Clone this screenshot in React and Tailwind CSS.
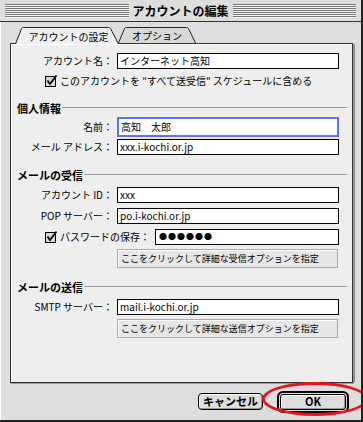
import React from 'react'

// Mac OS 9 style "edit account" dialog

function Check() {
  return (
    <svg width="13" height="13" viewBox="0 0 13 13" className="shrink-0">
      <rect x="0.5" y="1.5" width="10" height="10" fill="#d6d6d6" stroke="#000" />
      <path d="M2.5 5.5 L5 9 L11.5 0.5" fill="none" stroke="#000" strokeWidth="1.7" />
    </svg>
  )
}

function Field({ label, value, focus }) {
  return (
    <div className="flex items-center">
      <div className="w-[102px] text-right whitespace-nowrap">{label}</div>
      <div
        className={
          focus
            ? 'ml-[4px] w-[222px] h-[20px] flex items-center pl-[2px] bg-white border-2 border-[#5a74ff]'
            : 'ml-[4px] w-[222px] h-[16px] flex items-center pl-[2px] bg-white border border-black'
        }
      >
        {value}
      </div>
    </div>
  )
}

function Section({ title, className }) {
  return (
    <div className={`flex items-center h-[14px] pl-[6px] pr-[5px] ${className}`}>
      <span className="font-bold text-[11px] whitespace-nowrap">{title}</span>
      <div className="flex-1 h-px bg-[#999] ml-[1px] mb-[2px]" />
    </div>
  )
}

function OptionButton({ text, className }) {
  return (
    <div
      className={`ml-[106px] w-[221px] h-[19px] flex items-center pl-[3px] bg-[#e6e6e6] border border-[#aaa] shadow-[inset_1px_1px_0_#fff] text-[9px] whitespace-nowrap overflow-hidden ${className}`}
    >
      {text}
    </div>
  )
}

export default function App() {
  return (
    <div className="w-[363px] h-[422px] bg-[#dddddd] border-r-2 border-b-2 border-[#222] shadow-[inset_1px_0_0_#fff] relative overflow-hidden flex flex-col text-[10px] text-black font-['Noto_Sans_CJK_JP','Noto_Sans',sans-serif] leading-none">
      {/* Title bar */}
      <div className="h-[22px] flex items-center gap-[4px] px-[5px] border-b border-[#333] bg-[#dddddd]">
        <div className="flex-1 h-[14px] bg-[repeating-linear-gradient(to_bottom,#777_0px,#777_1px,#f4f4f4_1px,#f4f4f4_2px)]" />
        <span className="font-bold text-[12px] whitespace-nowrap">アカウントの編集</span>
        <div className="flex-1 h-[14px] bg-[repeating-linear-gradient(to_bottom,#777_0px,#777_1px,#f4f4f4_1px,#f4f4f4_2px)]" />
      </div>

      {/* Tabs */}
      <div className="flex ml-[15px] mt-[5px] h-[17px] relative z-10">
        <div className="relative w-[104px] h-[17px] flex items-center justify-center pt-[2px]">
          <svg width="104" height="17" viewBox="0 0 104 17" className="absolute inset-0">
            <path d="M0.5 17 L6.5 1.5 Q7 0.5 8.5 0.5 L93.5 0.5 Q95 0.5 95.5 1.5 L103.5 17 Z" fill="#eeeeee" />
            <path d="M0.5 17 L6.5 1.5 Q7 0.5 8.5 0.5 L93.5 0.5 Q95 0.5 95.5 1.5 L103.5 17" fill="none" stroke="#222" />
          </svg>
          <span className="relative pl-[3px]">アカウントの設定</span>
        </div>
        <div className="relative -ml-[1px] w-[78px] h-[16px] flex items-center justify-center pt-[2px]">
          <svg width="78" height="16" viewBox="0 0 78 16" className="absolute inset-0">
            <path d="M0.5 16 L6.5 1.5 Q7 0.5 8.5 0.5 L68.5 0.5 Q70 0.5 70.5 1.5 L77.5 16" fill="#d8d8d8" stroke="#222" />
          </svg>
          <span className="relative">オプション</span>
        </div>
      </div>

      {/* Panel */}
      <div className="ml-[10px] -mt-[1px] w-[343px] h-[340px] bg-[#eeeeee] border border-[#333] shadow-[1px_1px_0_#999,3px_0_0_-1px_#888,inset_1px_1px_0_#fff] flex flex-col">
        <div className="mt-[9px]">
          <Field label="アカウント名：" value="インターネット高知" />
        </div>
        <div className="mt-[5px] h-[14px] flex items-center gap-[2px] ml-[34px]">
          <Check />
          <span className="whitespace-nowrap">このアカウントを "すべて送受信" スケジュールに含める</span>
        </div>

        <Section title="個人情報" className="mt-[13px]" />
        <div className="mt-[2px]">
          <Field label="名前：" value="高知　太郎" focus />
        </div>
        <div className="mt-[2px]">
          <Field label="メール アドレス：" value="xxx.i-kochi.or.jp" />
        </div>

        <Section title="メールの受信" className="mt-[13px]" />
        <div className="mt-[5px]">
          <Field label="アカウント ID：" value="xxx" />
        </div>
        <div className="mt-[5px]">
          <Field label="POP サーバー：" value="po.i-kochi.or.jp" />
        </div>
        <div className="mt-[5px] flex items-center">
          <div className="ml-[34px] w-[106px] flex items-center gap-[2px]">
            <Check />
            <span className="whitespace-nowrap">パスワードの保存：</span>
          </div>
          <div className="ml-[4px] w-[184px] h-[16px] flex items-center pl-[3px] bg-white border border-black text-[8px] tracking-[1px]">
            ●●●●●●
          </div>
        </div>
        <OptionButton text="ここをクリックして詳細な受信オプションを指定" className="mt-[4px]" />

        <Section title="メールの送信" className="mt-[12px]" />
        <div className="mt-[5px]">
          <Field label="SMTP サーバー：" value="mail.i-kochi.or.jp" />
        </div>
        <OptionButton text="ここをクリックして詳細な送信オプションを指定" className="mt-[4px]" />
      </div>

      {/* Bottom buttons */}
      <div className="flex-1 flex items-center justify-end gap-[14px] pr-[12px]">
        <div className="w-[65px] h-[17px] flex items-center justify-center rounded-[4px] border border-black bg-[#dddddd] shadow-[inset_1px_1px_0_#fff,inset_-1px_-1px_0_#999] font-bold text-[11px]">
          キャンセル
        </div>
        <div className="rounded-[6px] border-2 border-black p-[1px] bg-[#dddddd]">
          <div className="w-[66px] h-[16px] flex items-center justify-center rounded-[3px] border border-black bg-[#dddddd] shadow-[inset_1px_1px_0_#fff,inset_-1px_-1px_0_#999] font-bold text-[11px]">
            OK
          </div>
        </div>
      </div>

      {/* Red highlight ellipse */}
      <div className="absolute left-[262px] top-[382px] w-[106px] h-[34px] rounded-[50%] border-[3px] border-[#e8141c]" />
    </div>
  )
}
